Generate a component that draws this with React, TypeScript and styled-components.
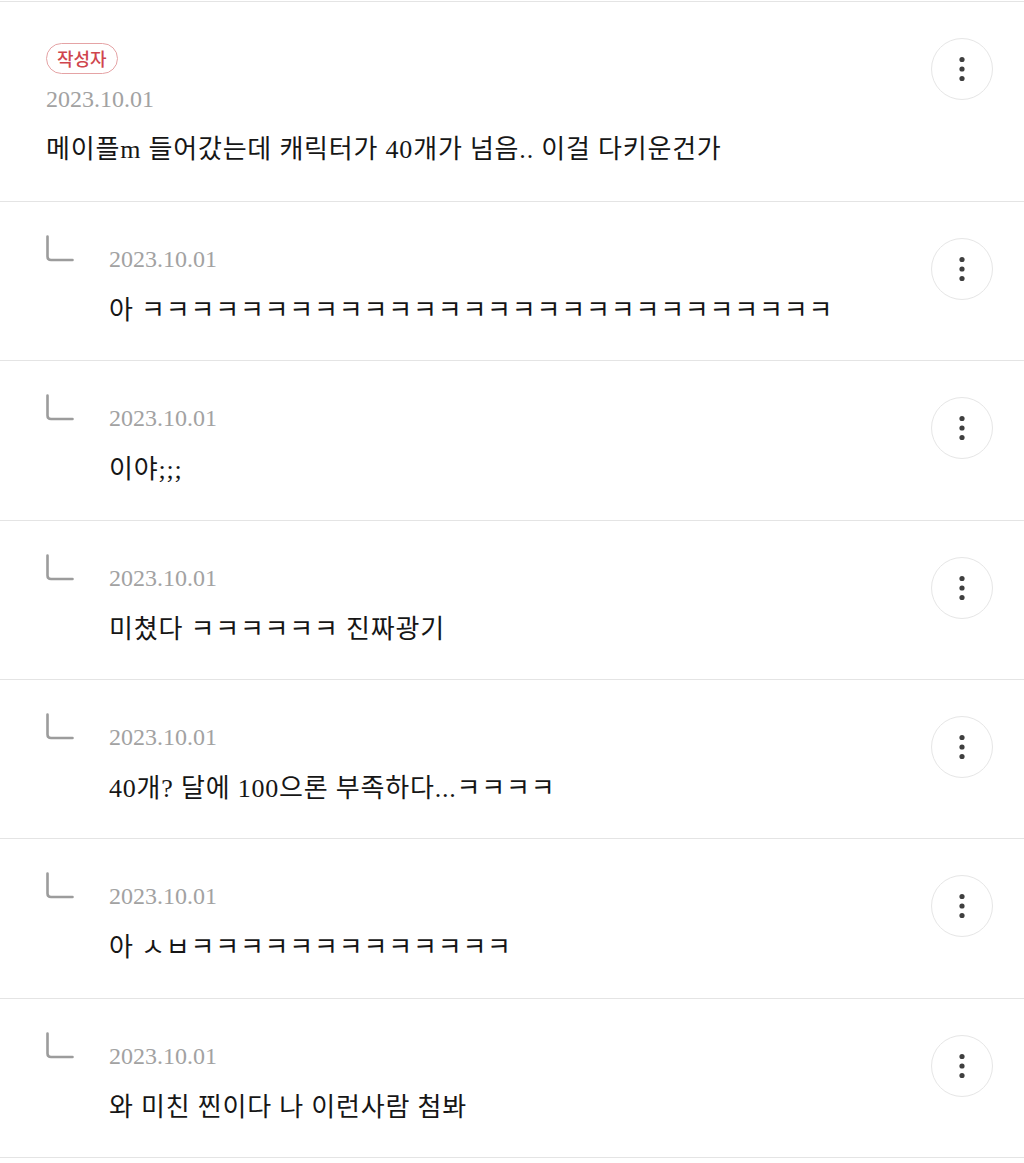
import React from 'react';
import styled, { createGlobalStyle } from 'styled-components';

const GlobalStyle = createGlobalStyle`
  html, body {
    margin: 0;
    padding: 0;
    background: #ffffff;
  }
  body {
    font-family: 'Liberation Serif', 'Noto Sans CJK KR', serif;
    color: #161616;
  }
`;

const List = styled.div`
  padding-top: 1px;
  width: 1024px;
`;

const Row = styled.div<{ $reply?: boolean }>`
  box-sizing: border-box;
  display: flex;
  align-items: flex-start;
  height: ${(p) => (p.$reply ? '159.33px' : '201px')};
  padding: 0 31px 0 46px;
  border-top: ${(p) => (p.$reply ? 'none' : '1px solid #e4e4e4')};
  border-bottom: 1px solid #e4e4e4;
`;

const ReplyMark = styled.div`
  flex: 0 0 auto;
  width: 63px;
  padding-top: 33px;
`;

const Content = styled.div<{ $reply?: boolean }>`
  flex: 1 1 auto;
  display: flex;
  flex-direction: column;
  align-items: flex-start;
  padding-top: ${(p) => (p.$reply ? '42px' : '41px')};
`;

const Badge = styled.span`
  box-sizing: border-box;
  display: inline-flex;
  align-items: center;
  justify-content: center;
  height: 31px;
  padding: 0 10px 1px;
  border: 1.5px solid #e5a3a5;
  border-radius: 16px;
  font-family: 'Noto Sans CJK KR', sans-serif;
  font-size: 18px;
  font-weight: 500;
  color: #cf454d;
  margin-bottom: 10px;
`;

const DateText = styled.div`
  font-family: 'Liberation Serif', serif;
  font-size: 24px;
  line-height: 30px;
  color: #a2a2a2;
`;

const Body = styled.div<{ $reply?: boolean }>`
  margin-top: ${(p) => (p.$reply ? '19px' : '18px')};
  font-family: 'Liberation Serif', 'Noto Sans CJK KR', serif;
  font-size: 26px;
  letter-spacing: 0.8px;
  line-height: 36px;
  color: #161616;
  white-space: nowrap;
`;

const MoreButton = styled.button<{ $reply?: boolean }>`
  flex: 0 0 auto;
  box-sizing: border-box;
  width: 62px;
  height: 62px;
  margin-top: ${(p) => (p.$reply ? '36px' : '36px')};
  border: 1.5px solid #e6e6e6;
  border-radius: 50%;
  background: #ffffff;
  display: flex;
  align-items: center;
  justify-content: center;
  padding: 0;
  cursor: pointer;
`;

function MoreIcon() {
  return (
    <svg width="8" height="26" viewBox="0 0 8 26">
      <circle cx="4" cy="3.5" r="2.6" fill="#3f3f3f" />
      <circle cx="4" cy="13" r="2.6" fill="#3f3f3f" />
      <circle cx="4" cy="22.5" r="2.6" fill="#3f3f3f" />
    </svg>
  );
}

function ReplyIcon() {
  return (
    <svg width="28" height="27" viewBox="0 0 28 27">
      <path
        d="M1.5 1.5 V21.5 Q1.5 25 5 25 H26.5"
        fill="none"
        stroke="#9c9c9c"
        strokeWidth="2.6"
        strokeLinecap="round"
      />
    </svg>
  );
}

const replies = [
  '아 ㅋㅋㅋㅋㅋㅋㅋㅋㅋㅋㅋㅋㅋㅋㅋㅋㅋㅋㅋㅋㅋㅋㅋㅋㅋㅋㅋㅋ',
  '이야;;;',
  '미쳤다 ㅋㅋㅋㅋㅋㅋ 진짜광기',
  '40개? 달에 100으론 부족하다...ㅋㅋㅋㅋ',
  '아 ㅅㅂㅋㅋㅋㅋㅋㅋㅋㅋㅋㅋㅋㅋㅋ',
  '와 미친 찐이다 나 이런사람 첨봐',
];

export default function App() {
  return (
    <>
      <GlobalStyle />
      <List>
        <Row>
          <Content>
            <Badge>작성자</Badge>
            <DateText>2023.10.01</DateText>
            <Body>메이플m 들어갔는데 캐릭터가 40개가 넘음.. 이걸 다키운건가</Body>
          </Content>
          <MoreButton type="button" aria-label="더보기">
            <MoreIcon />
          </MoreButton>
        </Row>
        {replies.map((text, i) => (
          <Row $reply key={i}>
            <ReplyMark>
              <ReplyIcon />
            </ReplyMark>
            <Content $reply>
              <DateText>2023.10.01</DateText>
              <Body $reply>{text}</Body>
            </Content>
            <MoreButton $reply type="button" aria-label="더보기">
              <MoreIcon />
            </MoreButton>
          </Row>
        ))}
      </List>
    </>
  );
}
